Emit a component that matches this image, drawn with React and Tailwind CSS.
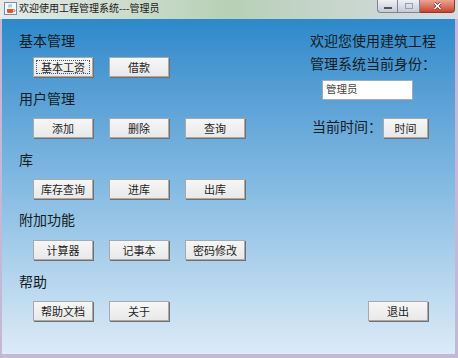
const font = { fontFamily: '"Noto Sans CJK SC", "Noto Sans", sans-serif' };

function Btn({ children, w = "w-[60px]", focus = false }) {
  return (
    <button
      type="button"
      className={`${w} h-[20px] shrink-0 flex items-center justify-center bg-gradient-to-b from-[#f6f6f6] to-[#e9e9e9] border border-[#a9a9a9] shadow-[1px_1px_0_#707070] text-[11px] leading-none text-[#1e1e1e]`}
    >
      {focus ? (
        <span className="w-[54px] h-[14px] flex items-center justify-center border border-dotted border-[#555]">
          {children}
        </span>
      ) : (
        children
      )}
    </button>
  );
}

function Heading({ children, className = "" }) {
  return (
    <div className={`h-[20px] text-[14px] leading-[20px] text-[#151b22] ${className}`}>{children}</div>
  );
}

function Row({ children, className = "" }) {
  return <div className={`flex gap-[16px] pl-[14px] ${className}`}>{children}</div>;
}

export default function App() {
  return (
    <div className="w-[458px] h-[358px] flex flex-col bg-[#c6b8d4] overflow-hidden" style={font}>
      {/* title bar */}
      <div className="h-[19px] flex items-start bg-gradient-to-r from-[#e6eae9] via-[#b8d0b6] to-[#d8dbe4] pl-[4px]">
        <svg width="13" height="13" viewBox="0 0 13 13" className="mt-[2px]">
          <rect x="0.5" y="0.5" width="12" height="12" fill="#f4f7fb" stroke="#6d8fb8" />
          <path d="M3 7h6v2.5a1.5 1.5 0 0 1-1.5 1.5h-3A1.5 1.5 0 0 1 3 9.5z" fill="#d9582a" />
          <path d="M9 7.6h1a1 1 0 0 1 0 2h-1" fill="none" stroke="#d9582a" strokeWidth="0.8" />
          <path d="M5 2.5c1 1-0.8 1.6 0.2 3M7 2.3c1 1-0.8 1.6 0.2 3" stroke="#4a78b0" strokeWidth="0.8" fill="none" />
        </svg>
        <div className="ml-[2px] mt-[1px] text-[10px] leading-[14px] text-[#1a1a1a]">欢迎使用工程管理系统---管理员</div>
        <div className="ml-auto flex mr-[3px]">
          <div className="w-[21px] h-[13px] rounded-bl-[4px] border border-t-0 border-[#7c8496] bg-gradient-to-b from-[#eef0f5] to-[#c4cad6] flex items-end justify-center pb-[3px]">
            <div className="w-[8px] h-[2px] bg-white border border-[#555]" />
          </div>
          <div className="w-[22px] h-[13px] border border-t-0 border-l-0 border-[#7c8496] bg-gradient-to-b from-[#eef0f5] to-[#c4cad6] flex items-center justify-center">
            <div className="w-[8px] h-[6px] border border-[#9aa0ac]" />
          </div>
          <div className="w-[35px] h-[13px] rounded-br-[4px] border border-t-0 border-l-0 border-[#8a3a30] bg-gradient-to-b from-[#e9a594] to-[#c8412e] flex items-center justify-center">
            <svg width="9" height="8" viewBox="0 0 9 8">
              <path d="M1.5 1l6 6M7.5 1l-6 6" stroke="#5a2018" strokeWidth="2.6" />
              <path d="M1.5 1l6 6M7.5 1l-6 6" stroke="#ffffff" strokeWidth="1.6" />
            </svg>
          </div>
        </div>
      </div>

      {/* content */}
      <div className="flex-1 ml-[2px] mr-[3px] mb-[4px] flex flex-col bg-gradient-to-b from-[#2c89ca] via-[#84bbe2] to-[#dcebf7]">
        <div className="flex">
          <div className="w-[308px] pl-[17px] pt-[11px] flex flex-col">
            <Heading>基本管理</Heading>
            <Row className="mt-[7px]">
              <Btn focus>基本工资</Btn>
              <Btn>借款</Btn>
            </Row>
            <Heading className="mt-[11px]">用户管理</Heading>
            <Row className="mt-[10px]">
              <Btn>添加</Btn>
              <Btn>删除</Btn>
              <Btn>查询</Btn>
            </Row>
            <Heading className="mt-[11px]">库</Heading>
            <Row className="mt-[10px]">
              <Btn>库存查询</Btn>
              <Btn>进库</Btn>
              <Btn>出库</Btn>
            </Row>
            <Heading className="mt-[10px]">附加功能</Heading>
            <Row className="mt-[11px]">
              <Btn>计算器</Btn>
              <Btn>记事本</Btn>
              <Btn>密码修改</Btn>
            </Row>
          </div>
          <div className="flex-1 pt-[11px] flex flex-col text-[#151b22]">
            <div className="h-[20px] text-[14px] leading-[20px]">欢迎您使用建筑工程</div>
            <div className="h-[20px] mt-[3px] text-[14px] leading-[20px]">管理系统当前身份：</div>
            <div className="ml-[12px] mt-[7px] w-[91px] h-[20px] bg-white border border-[#a3abb6] pl-[3px] text-[10.5px] leading-[16px] text-[#444]">
              管理员
            </div>
            <div className="mt-[18px] flex items-start ml-[2px]">
              <div className="h-[20px] -mt-[2px] text-[14px] leading-[20px] w-[71px]">当前时间：</div>
              <Btn w="w-[45px]">时间</Btn>
            </div>
          </div>
        </div>

        <div className="pl-[17px] pr-[27px] flex flex-col">
          <Heading className="mt-[11px]">帮助</Heading>
          <Row className="mt-[10px]">
            <Btn>帮助文档</Btn>
            <Btn>关于</Btn>
            <div className="ml-auto">
              <Btn>退出</Btn>
            </div>
          </Row>
        </div>
      </div>
    </div>
  );
}
